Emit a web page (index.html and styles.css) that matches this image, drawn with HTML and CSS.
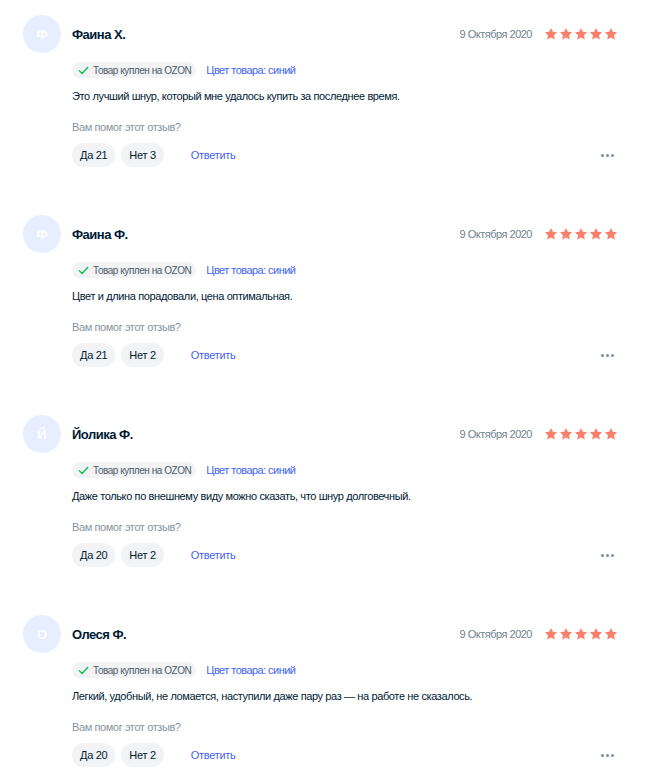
FILE: index.html
```html
<!DOCTYPE html>
<html lang="ru">
<head>
<meta charset="utf-8">
<link rel="stylesheet" href="styles.css">
</head>
<body>
<div class="reviews">

  <div class="review">
    <div class="avatar">Ф</div>
    <div class="content">
      <div class="head">
        <div class="name">Фаина Х.</div>
        <div class="meta">
          <span class="date">9 Октября 2020</span>
          <span class="stars">
            <svg viewBox="0 0 24 24"><path d="M12 1.5l3.2 6.6 7.2 1-5.2 5.1 1.25 7.2L12 18l-6.45 3.4 1.25-7.2L1.6 9.1l7.2-1z"/></svg><svg viewBox="0 0 24 24"><path d="M12 1.5l3.2 6.6 7.2 1-5.2 5.1 1.25 7.2L12 18l-6.45 3.4 1.25-7.2L1.6 9.1l7.2-1z"/></svg><svg viewBox="0 0 24 24"><path d="M12 1.5l3.2 6.6 7.2 1-5.2 5.1 1.25 7.2L12 18l-6.45 3.4 1.25-7.2L1.6 9.1l7.2-1z"/></svg><svg viewBox="0 0 24 24"><path d="M12 1.5l3.2 6.6 7.2 1-5.2 5.1 1.25 7.2L12 18l-6.45 3.4 1.25-7.2L1.6 9.1l7.2-1z"/></svg><svg viewBox="0 0 24 24"><path d="M12 1.5l3.2 6.6 7.2 1-5.2 5.1 1.25 7.2L12 18l-6.45 3.4 1.25-7.2L1.6 9.1l7.2-1z"/></svg>
          </span>
        </div>
      </div>
      <div class="tags">
        <span class="badge"><svg class="check" viewBox="0 0 12 12"><path d="M1.5 6.2l3 3 6-6.4"/></svg>Товар куплен на OZON</span>
        <span class="color">Цвет товара: синий</span>
      </div>
      <p class="text">Это лучший шнур, который мне удалось купить за последнее время.</p>
      <p class="helpful">Вам помог этот отзыв?</p>
      <div class="actions">
        <span class="vote">Да 21</span>
        <span class="vote">Нет 3</span>
        <span class="reply">Ответить</span>
        <span class="more"><i></i><i></i><i></i></span>
      </div>
    </div>
  </div>

  <div class="review">
    <div class="avatar">Ф</div>
    <div class="content">
      <div class="head">
        <div class="name">Фаина Ф.</div>
        <div class="meta">
          <span class="date">9 Октября 2020</span>
          <span class="stars">
            <svg viewBox="0 0 24 24"><path d="M12 1.5l3.2 6.6 7.2 1-5.2 5.1 1.25 7.2L12 18l-6.45 3.4 1.25-7.2L1.6 9.1l7.2-1z"/></svg><svg viewBox="0 0 24 24"><path d="M12 1.5l3.2 6.6 7.2 1-5.2 5.1 1.25 7.2L12 18l-6.45 3.4 1.25-7.2L1.6 9.1l7.2-1z"/></svg><svg viewBox="0 0 24 24"><path d="M12 1.5l3.2 6.6 7.2 1-5.2 5.1 1.25 7.2L12 18l-6.45 3.4 1.25-7.2L1.6 9.1l7.2-1z"/></svg><svg viewBox="0 0 24 24"><path d="M12 1.5l3.2 6.6 7.2 1-5.2 5.1 1.25 7.2L12 18l-6.45 3.4 1.25-7.2L1.6 9.1l7.2-1z"/></svg><svg viewBox="0 0 24 24"><path d="M12 1.5l3.2 6.6 7.2 1-5.2 5.1 1.25 7.2L12 18l-6.45 3.4 1.25-7.2L1.6 9.1l7.2-1z"/></svg>
          </span>
        </div>
      </div>
      <div class="tags">
        <span class="badge"><svg class="check" viewBox="0 0 12 12"><path d="M1.5 6.2l3 3 6-6.4"/></svg>Товар куплен на OZON</span>
        <span class="color">Цвет товара: синий</span>
      </div>
      <p class="text">Цвет и длина порадовали, цена оптимальная.</p>
      <p class="helpful">Вам помог этот отзыв?</p>
      <div class="actions">
        <span class="vote">Да 21</span>
        <span class="vote">Нет 2</span>
        <span class="reply">Ответить</span>
        <span class="more"><i></i><i></i><i></i></span>
      </div>
    </div>
  </div>

  <div class="review">
    <div class="avatar">Й</div>
    <div class="content">
      <div class="head">
        <div class="name">Йолика Ф.</div>
        <div class="meta">
          <span class="date">9 Октября 2020</span>
          <span class="stars">
            <svg viewBox="0 0 24 24"><path d="M12 1.5l3.2 6.6 7.2 1-5.2 5.1 1.25 7.2L12 18l-6.45 3.4 1.25-7.2L1.6 9.1l7.2-1z"/></svg><svg viewBox="0 0 24 24"><path d="M12 1.5l3.2 6.6 7.2 1-5.2 5.1 1.25 7.2L12 18l-6.45 3.4 1.25-7.2L1.6 9.1l7.2-1z"/></svg><svg viewBox="0 0 24 24"><path d="M12 1.5l3.2 6.6 7.2 1-5.2 5.1 1.25 7.2L12 18l-6.45 3.4 1.25-7.2L1.6 9.1l7.2-1z"/></svg><svg viewBox="0 0 24 24"><path d="M12 1.5l3.2 6.6 7.2 1-5.2 5.1 1.25 7.2L12 18l-6.45 3.4 1.25-7.2L1.6 9.1l7.2-1z"/></svg><svg viewBox="0 0 24 24"><path d="M12 1.5l3.2 6.6 7.2 1-5.2 5.1 1.25 7.2L12 18l-6.45 3.4 1.25-7.2L1.6 9.1l7.2-1z"/></svg>
          </span>
        </div>
      </div>
      <div class="tags">
        <span class="badge"><svg class="check" viewBox="0 0 12 12"><path d="M1.5 6.2l3 3 6-6.4"/></svg>Товар куплен на OZON</span>
        <span class="color">Цвет товара: синий</span>
      </div>
      <p class="text">Даже только по внешнему виду можно сказать, что шнур долговечный.</p>
      <p class="helpful">Вам помог этот отзыв?</p>
      <div class="actions">
        <span class="vote">Да 20</span>
        <span class="vote">Нет 2</span>
        <span class="reply">Ответить</span>
        <span class="more"><i></i><i></i><i></i></span>
      </div>
    </div>
  </div>

  <div class="review">
    <div class="avatar">О</div>
    <div class="content">
      <div class="head">
        <div class="name">Олеся Ф.</div>
        <div class="meta">
          <span class="date">9 Октября 2020</span>
          <span class="stars">
            <svg viewBox="0 0 24 24"><path d="M12 1.5l3.2 6.6 7.2 1-5.2 5.1 1.25 7.2L12 18l-6.45 3.4 1.25-7.2L1.6 9.1l7.2-1z"/></svg><svg viewBox="0 0 24 24"><path d="M12 1.5l3.2 6.6 7.2 1-5.2 5.1 1.25 7.2L12 18l-6.45 3.4 1.25-7.2L1.6 9.1l7.2-1z"/></svg><svg viewBox="0 0 24 24"><path d="M12 1.5l3.2 6.6 7.2 1-5.2 5.1 1.25 7.2L12 18l-6.45 3.4 1.25-7.2L1.6 9.1l7.2-1z"/></svg><svg viewBox="0 0 24 24"><path d="M12 1.5l3.2 6.6 7.2 1-5.2 5.1 1.25 7.2L12 18l-6.45 3.4 1.25-7.2L1.6 9.1l7.2-1z"/></svg><svg viewBox="0 0 24 24"><path d="M12 1.5l3.2 6.6 7.2 1-5.2 5.1 1.25 7.2L12 18l-6.45 3.4 1.25-7.2L1.6 9.1l7.2-1z"/></svg>
          </span>
        </div>
      </div>
      <div class="tags">
        <span class="badge"><svg class="check" viewBox="0 0 12 12"><path d="M1.5 6.2l3 3 6-6.4"/></svg>Товар куплен на OZON</span>
        <span class="color">Цвет товара: синий</span>
      </div>
      <p class="text">Легкий, удобный, не ломается, наступили даже пару раз — на работе не сказалось.</p>
      <p class="helpful">Вам помог этот отзыв?</p>
      <div class="actions">
        <span class="vote">Да 20</span>
        <span class="vote">Нет 2</span>
        <span class="reply">Ответить</span>
        <span class="more"><i></i><i></i><i></i></span>
      </div>
    </div>
  </div>

</div>
</body>
</html>
```
FILE: styles.css
```css
* { box-sizing: border-box; }

body {
  margin: 0;
  background: #fff;
  font-family: "Liberation Sans", Arial, sans-serif;
  color: #001a34;
}

.reviews {
  display: flex;
  flex-direction: column;
}

.review {
  height: 200px;
  display: flex;
  gap: 11px;
  padding: 15px 32px 0 23px;
}

.avatar {
  flex: 0 0 38px;
  width: 38px;
  height: 38px;
  border-radius: 50%;
  background: #e6eeff;
  color: #fff;
  font-weight: 700;
  font-size: 13px;
  display: flex;
  align-items: center;
  justify-content: center;
}

.content {
  flex: 1;
  display: flex;
  flex-direction: column;
}

.head {
  height: 38px;
  display: flex;
  align-items: center;
  justify-content: space-between;
}

.name {
  font-size: 13px;
  font-weight: 700;
  letter-spacing: -0.5px;
}

.meta {
  display: flex;
  align-items: center;
  gap: 12px;
}

.date {
  font-size: 11px;
  color: #707f8d;
  letter-spacing: -0.5px;
}

.stars {
  display: flex;
  gap: 1px;
}

.stars svg {
  width: 14px;
  height: 14px;
  fill: #f9806a;
}

.tags {
  margin-top: 9px;
  display: flex;
  align-items: center;
  gap: 10px;
}

.badge {
  height: 16px;
  display: inline-flex;
  align-items: center;
  padding: 0 5px 0 6px;
  background: #f2f3f5;
  border-radius: 8px;
  font-size: 10px;
  color: #4d5a66;
  letter-spacing: -0.45px;
}

.check {
  width: 11px;
  height: 11px;
  margin-right: 4px;
  fill: none;
  stroke: #10c44c;
  stroke-width: 1.6;
  stroke-linecap: round;
  stroke-linejoin: round;
}

.color {
  font-size: 11px;
  color: #3f62f5;
  letter-spacing: -0.55px;
}

.text {
  margin: 10px 0 0;
  font-size: 11px;
  line-height: 16px;
  letter-spacing: -0.38px;
}

.helpful {
  margin: 15px 0 0;
  font-size: 11px;
  line-height: 16px;
  color: #8894a0;
  letter-spacing: -0.4px;
}

.actions {
  margin-top: 8px;
  display: flex;
  align-items: center;
  gap: 6px;
}

.vote {
  height: 24px;
  padding: 0 8px;
  display: inline-flex;
  align-items: center;
  background: #f2f3f5;
  border-radius: 12px;
  font-size: 11px;
  color: #001a34;
  letter-spacing: -0.3px;
}

.reply {
  margin-left: 21px;
  font-size: 11px;
  color: #3f62f5;
  letter-spacing: -0.3px;
}

.more {
  margin-left: auto;
  margin-right: 4px;
  display: flex;
  gap: 2px;
}

.more i {
  width: 3px;
  height: 3px;
  border-radius: 50%;
  background: #7f8c9c;
}
```
